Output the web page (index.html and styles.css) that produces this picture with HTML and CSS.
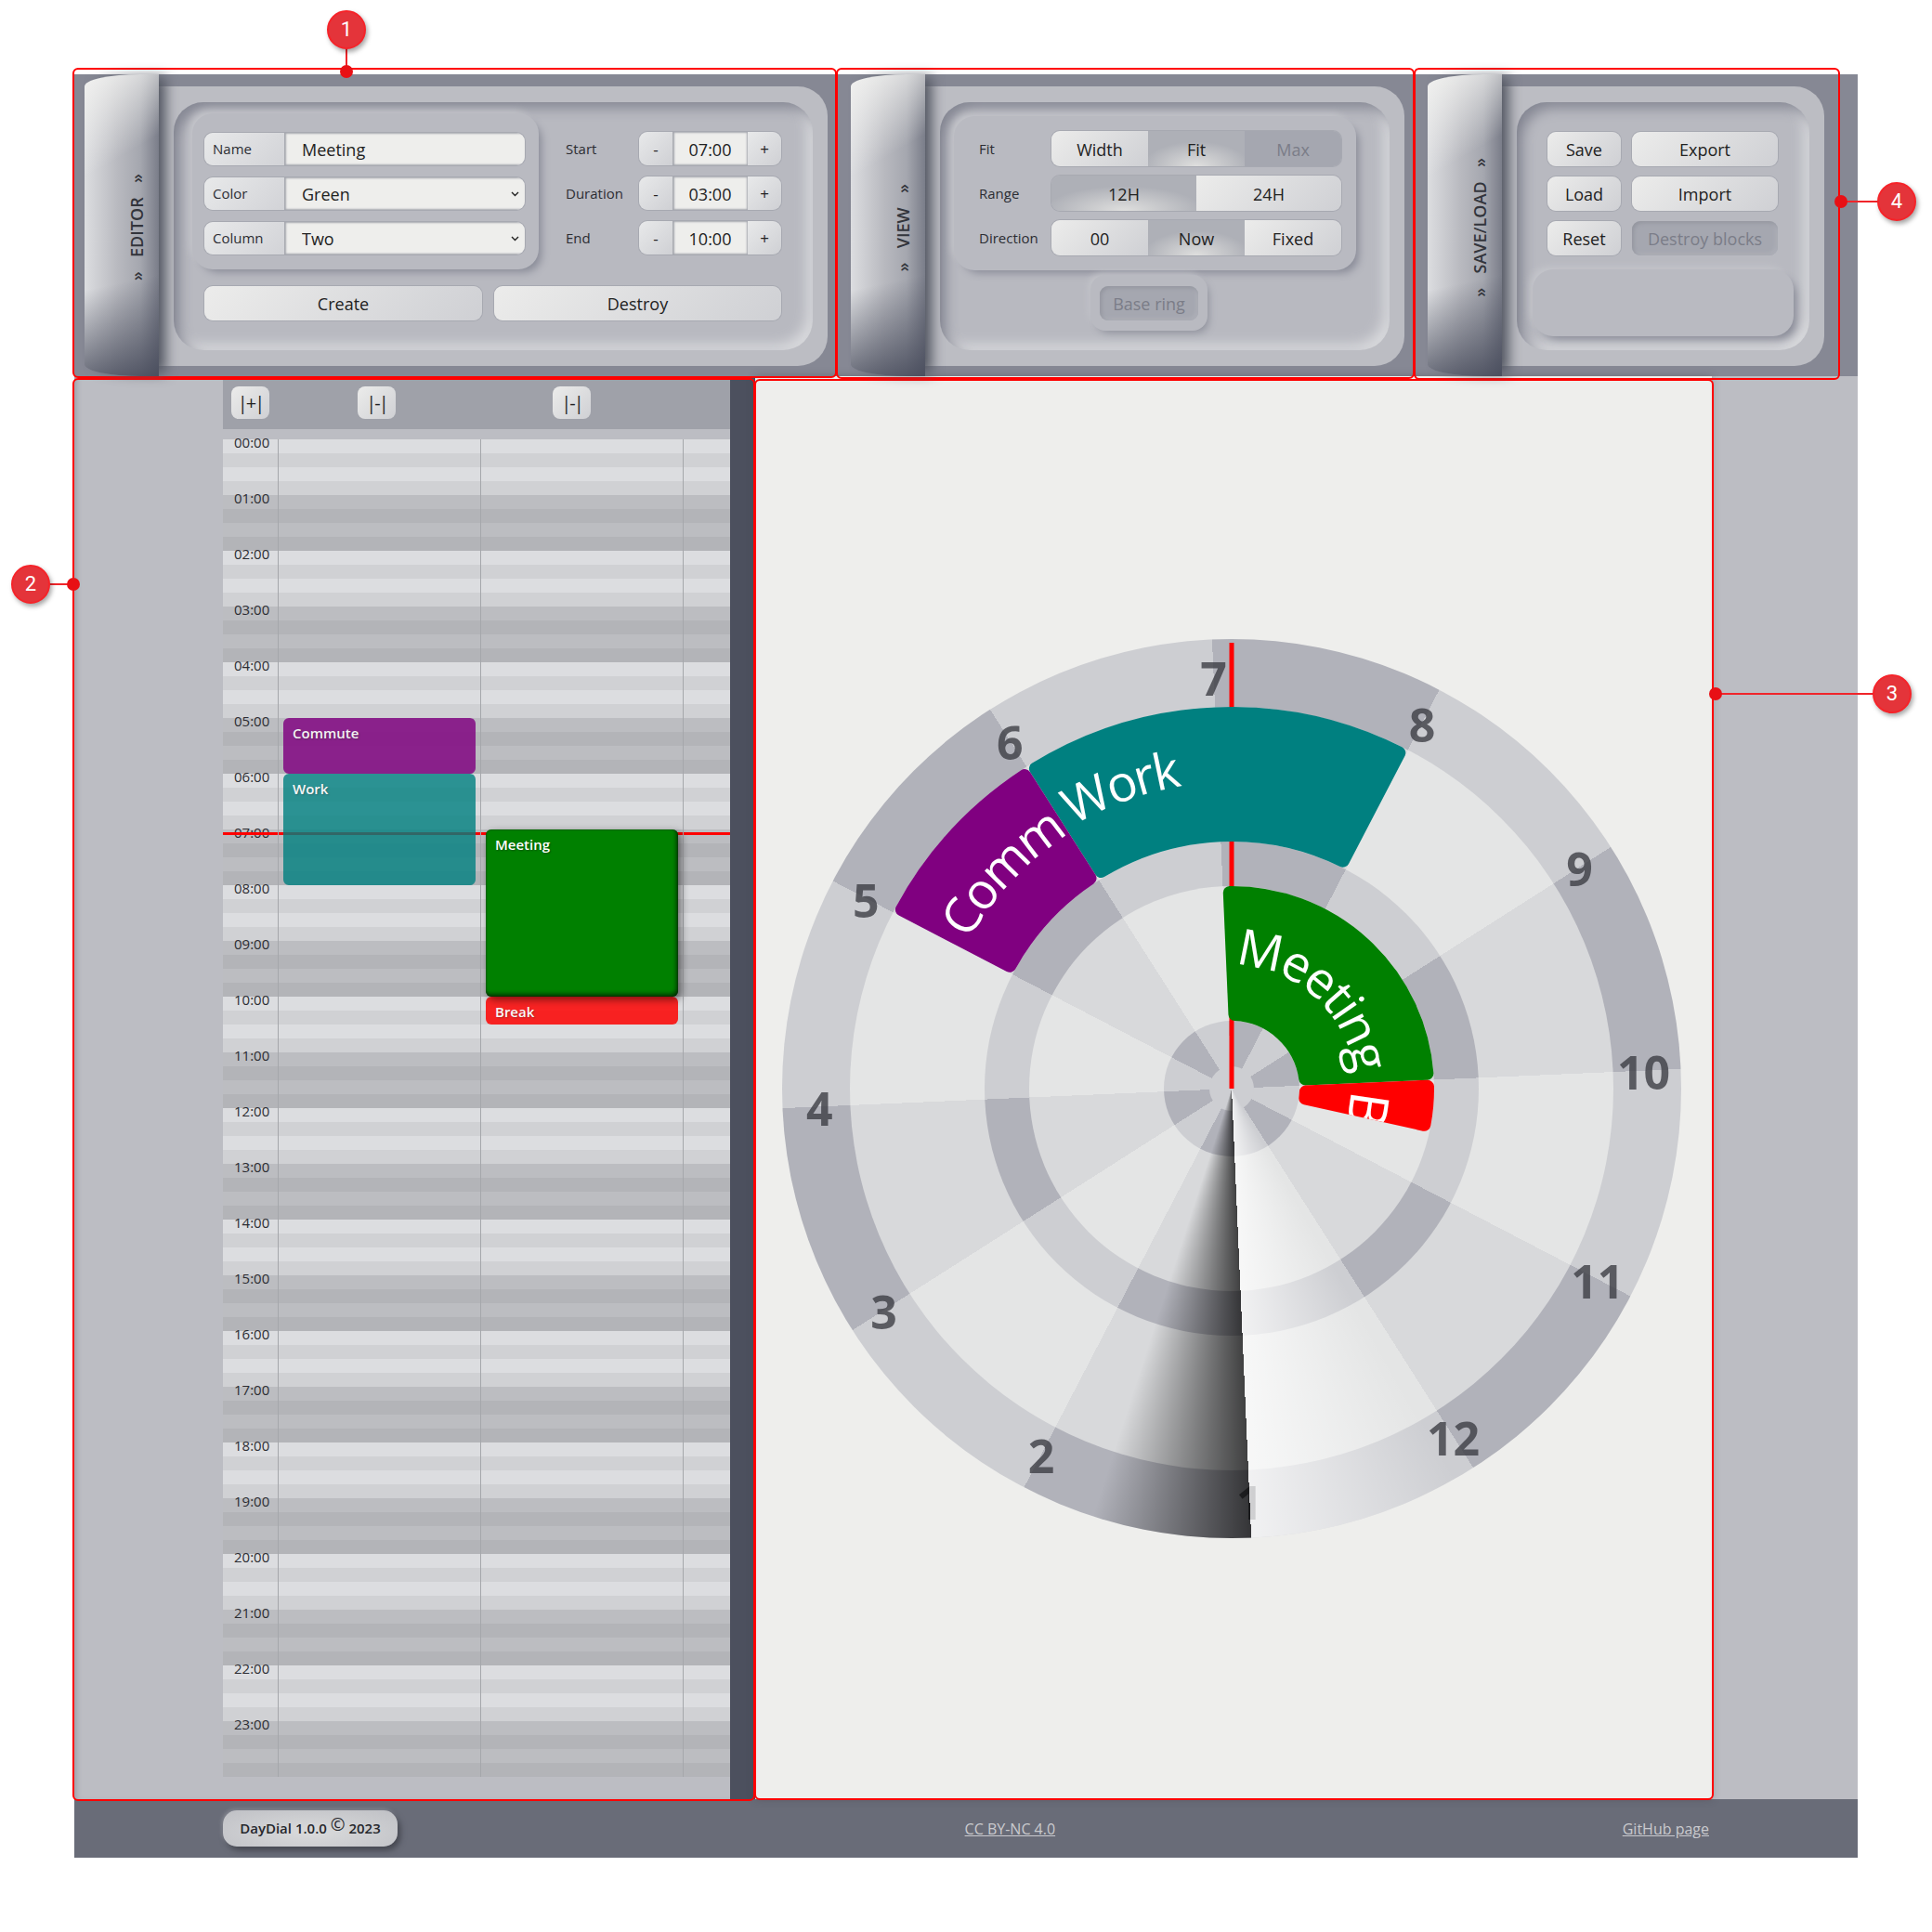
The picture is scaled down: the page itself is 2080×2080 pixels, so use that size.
FILE: index.html
```html
<!DOCTYPE html>
<html lang="en">
<head>
    <meta charset="UTF-8">
    <title>DayDial</title>
    <link rel="stylesheet" href="styles.css">
</head>
<body>
<div class="app">
    <div class="toolbar">
        <section class="panel panel-editor">
            <div class="tab"><span>» &nbsp;EDITOR&nbsp; »</span></div>
            <div class="panel-main">
                <div class="well well-editor">
                    <div class="editor-top">
                        <div class="raised fields">
                            <div class="field"><label>Name</label><input type="text" value="Meeting"></div>
                            <div class="field"><label>Color</label><select><option>Green</option></select></div>
                            <div class="field"><label>Column</label><select><option>Two</option></select></div>
                        </div>
                        <div class="times">
                            <div class="time-row"><span class="lbl">Start</span><div class="spinner"><button>-</button><input type="text" value="07:00"><button>+</button></div></div>
                            <div class="time-row"><span class="lbl">Duration</span><div class="spinner"><button>-</button><input type="text" value="03:00"><button>+</button></div></div>
                            <div class="time-row"><span class="lbl">End</span><div class="spinner"><button>-</button><input type="text" value="10:00"><button>+</button></div></div>
                        </div>
                    </div>
                    <div class="editor-actions">
                        <button class="btn btn-create">Create</button>
                        <button class="btn btn-destroy">Destroy</button>
                    </div>
                </div>
            </div>
        </section>

        <section class="panel panel-view">
            <div class="tab"><span>» &nbsp;VIEW&nbsp; »</span></div>
            <div class="panel-main">
                <div class="well well-view">
                    <div class="raised options">
                        <div class="opt-row"><span class="lbl">Fit</span>
                            <div class="seg"><button>Width</button><button class="on">Fit</button><button class="off">Max</button></div></div>
                        <div class="opt-row"><span class="lbl">Range</span>
                            <div class="seg"><button class="on">12H</button><button>24H</button></div></div>
                        <div class="opt-row"><span class="lbl">Direction</span>
                            <div class="seg"><button>00</button><button class="on">Now</button><button>Fixed</button></div></div>
                    </div>
                    <div class="raised base-wrap"><button class="btn off btn-base">Base ring</button></div>
                </div>
            </div>
        </section>

        <section class="panel panel-save">
            <div class="tab"><span>» &nbsp;SAVE/LOAD&nbsp; »</span></div>
            <div class="panel-main">
                <div class="well well-save">
                    <div class="save-grid">
                        <button class="btn">Save</button><button class="btn">Export</button>
                        <button class="btn">Load</button><button class="btn">Import</button>
                        <button class="btn">Reset</button><button class="btn off">Destroy blocks</button>
                    </div>
                    <div class="raised save-blank"></div>
                </div>
            </div>
        </section>
    </div>

    <div class="content">
        <div class="planner">
            <div class="calendar">
                <div class="cal-head">
                    <div class="cal-head-time"><button class="mini">|+|</button></div>
                    <div class="cal-head-col"><button class="mini">|-|</button></div>
                    <div class="cal-head-col"><button class="mini">|-|</button></div>
                </div>
                <div class="cal-grid">
                    <div class="hours">
                        <div>00:00</div><div>01:00</div><div>02:00</div><div>03:00</div>
                        <div>04:00</div><div>05:00</div><div>06:00</div><div>07:00</div>
                        <div>08:00</div><div>09:00</div><div>10:00</div><div>11:00</div>
                        <div>12:00</div><div>13:00</div><div>14:00</div><div>15:00</div>
                        <div>16:00</div><div>17:00</div><div>18:00</div><div>19:00</div>
                        <div>20:00</div><div>21:00</div><div>22:00</div><div>23:00</div>
                    </div>
                    <div class="now-line"></div>
                    <div class="cal-col">
                        <div class="block block-commute">Commute</div>
                        <div class="block block-work">Work</div>
                    </div>
                    <div class="cal-col">
                        <div class="block block-meeting">Meeting</div>
                        <div class="block block-break">Break</div>
                    </div>
                    <div class="cal-col cal-col-empty"></div>
                </div>
            </div>
            <div class="cal-scroll"></div>
        </div>

        <div class="dial-pane">
            <div class="dial">
                <div class="ring ring-a">
                    <div class="ring ring-b">
                        <div class="ring ring-c">
                            <div class="ring ring-d">
                                <div class="ring ring-e">
                                    <div class="ring ring-hub"></div>
                                </div>
                            </div>
                        </div>
                    </div>
                </div>

                <svg class="dial-svg" viewBox="-484 -484 968 968">
                    <defs>
                        <path id="arc-work" d="M-170 -283 A330 330 0 0 1 150 -294"/>
                        <path id="arc-comm" d="M-283 -160 A325 325 0 0 1 -172 -276"/>
                        <path id="arc-meeting" d="M3.5 -133 A133 133 0 0 1 131 23"/>
                        <path id="arc-break" d="M128 1.1 A128 128 0 0 1 22 126"/>
                        <clipPath id="clip-break"><path d="M60 -2 L230 -5 L214 47 L71 16 Z"/></clipPath>
                    </defs>
                    <g class="hour-labels">
                        <text x="-19.4" y="-442">7</text>
                        <text x="205" y="-392.3">8</text>
                        <text x="374.5" y="-237.1">9</text>
                        <text x="443.6" y="-17.9">10</text>
                        <text x="393.8" y="206.5">11</text>
                        <text x="238.6" y="376">12</text>
                        <text x="19.4" y="445.1">1</text>
                        <text x="-205" y="395.3">2</text>
                        <text x="-374.5" y="240.1">3</text>
                        <text x="-443.6" y="20.9">4</text>
                        <text x="-393.8" y="-203.5">5</text>
                        <text x="-238.6" y="-373">6</text>
                    </g>
                    <rect class="needle" x="-2.5" y="-480" width="5" height="480"/>
                    <path class="arc arc-teal" d="M-211.1 -344.5 A404 404 0 0 1 180.3 -361.5 L119.8 -245.3 A273 273 0 0 0 -140.7 -233.9 Z"/>
                    <path class="arc arc-purple" d="M-355.1 -192.7 A404 404 0 0 1 -222.9 -336.9 L-152.5 -226.4 A273 273 0 0 0 -238.9 -132.2 Z"/>
                    <path class="arc arc-green" d="M-2.2 -211 A211 211 0 0 1 210.4 -16.2 L79.3 -10.5 A80 80 0 0 0 3.5 -79.9 Z"/>
                    <path class="arc arc-red" d="M211 -2.2 A211 211 0 0 1 207.4 38.8 L79.3 10.4 A80 80 0 0 0 79.9 3.5 Z"/>
                    <text class="arc-text"><textPath href="#arc-work">Work</textPath></text>
                    <text class="arc-text"><textPath href="#arc-comm">Comm</textPath></text>
                    <text class="arc-text"><textPath href="#arc-meeting">Meeting</textPath></text>
                    <text class="arc-text arc-text-b" clip-path="url(#clip-break)"><textPath href="#arc-break">B</textPath></text>
                </svg>

                <div class="seam"></div>
            </div>
        </div>
    </div>

    <footer class="footer">
        <div class="badge">DayDial 1.0.0 <span class="copy">©</span> 2023</div>
        <a href="#">CC BY-NC 4.0</a>
        <a href="#">GitHub page</a>
    </footer>
</div>

<!-- callouts on top of the screenshot -->
<div class="frame frame-1"></div>
<div class="frame frame-view"></div>
<div class="frame frame-4"></div>
<div class="frame frame-2"></div>
<div class="frame frame-3"></div>

<div class="lead lead-1"></div>
<div class="lead lead-2"></div>
<div class="lead lead-3"></div>
<div class="lead lead-4"></div>
<div class="dot dot-1"></div>
<div class="dot dot-2"></div>
<div class="dot dot-3"></div>
<div class="dot dot-4"></div>
<div class="pin pin-1">1</div>
<div class="pin pin-2">2</div>
<div class="pin pin-3">3</div>
<div class="pin pin-4">4</div>
</body>
</html>
```

FILE: styles.css
```css
body{
    margin: 0;
    background: #fff;
    font-family: "Open Sans", "Noto Sans", sans-serif;
    color: #222;
}
button, input, select{
    font-family: inherit;
    color: #222;
}
.app{
    width: 1920px;
    margin: 80px 0 0 80px;
}

/* top bar */
.toolbar{
    display: flex;
    height: 325px;
    background: #868894;
}
.panel{
    display: flex;
    box-sizing: border-box;
}
.panel-editor{
    width: 820px;
    padding: 0 9px 0 11px;
}
.panel-view{
    width: 622px;
    padding: 0 10px 0 16px;
}
.panel-save{
    width: 478px;
    padding: 0 36px 0 15px;
}
.tab{
    position: relative;
    z-index: 2;
    width: 80px;
    flex: none;
    display: flex;
    align-items: center;
    justify-content: center;
    padding: 5px 0 0 32px;
    box-sizing: border-box;
    border-radius: 60px 0 0 60px / 13px 0 0 13px;
    background:
        linear-gradient(150deg, rgba(242,242,240,.95) 0%, rgba(242,242,240,0) 30%),
        linear-gradient(168deg, rgba(70,74,90,0) 68%, rgba(70,74,90,.9) 100%),
        linear-gradient(to right, #dcdde0 0, #b8b9bf 45%, #a5a7af 75%, #7a7d89 100%);
    box-shadow: 10px 0 14px -3px #50545f;
}
.tab span{
    writing-mode: vertical-rl;
    transform: rotate(180deg);
    font-size: 18px;
    font-weight: 600;
    word-spacing: 3px;
    color: #33353c;
    white-space: nowrap;
}
.panel-main{
    flex: 1;
    margin: 13px 0 11px;
    padding: 17px 16px;
    display: flex;
    background: #bcbdc3;
    border-radius: 0 32px 32px 0;
}
.well{
    flex: 1;
    box-sizing: border-box;
    border-radius: 32px;
    background: #b8b9c0;
    box-shadow: inset 8px 8px 14px -2px #858793, inset -8px -8px 14px -2px #d9dadd;
}
.raised{
    box-sizing: border-box;
    background: #b9bac1;
    border-radius: 22px;
    box-shadow: 6px 6px 9px -3px #8a8c98, -5px -5px 9px -3px #c6c7cc;
}

/* editor */
.well-editor{
    padding: 12px 34px 0 20px;
}
.editor-top{
    display: flex;
}
.fields{
    width: 373px;
    height: 168px;
    padding: 21px 15px 0 13px;
    display: flex;
    flex-direction: column;
    gap: 13px;
}
.field{
    display: flex;
    height: 35px;
    border-radius: 9px;
    box-shadow: 0 0 0 1px #a7a9b1;
    overflow: hidden;
}
.field label{
    width: 86px;
    flex: none;
    box-sizing: border-box;
    padding-left: 9px;
    font-size: 15px;
    line-height: 35px;
    color: #2c2d33;
    background: linear-gradient(135deg, #e8e9ea, #d2d3d7);
}
.field input, .field select{
    flex: 1;
    min-width: 0;
    box-sizing: border-box;
    border: 0;
    outline: 0;
    padding: 0 0 0 19px;
    font-size: 18px;
    background-color: #eeeeec;
    box-shadow: inset 3px 2px 2px -1px #a6a8af, inset 0 -2px 2px -1px #a6a8af;
}
.field select{
    padding-left: 19px;
    appearance: none;
    background-image: url("data:image/svg+xml,%3Csvg xmlns='http://www.w3.org/2000/svg' width='9' height='6'%3E%3Cpath d='M1 1l3.5 3.5L8 1' fill='none' stroke='%23222' stroke-width='1.4'/%3E%3C/svg%3E");
    background-repeat: no-repeat;
    background-position: right 6px center;
}
.times{
    margin-left: 29px;
    padding-top: 20px;
    display: flex;
    flex-direction: column;
    gap: 12px;
}
.time-row{
    display: flex;
    align-items: center;
    width: 232px;
}
.lbl{
    font-size: 15px;
    color: #2c2d33;
}
.time-row .lbl{
    width: 79px;
    flex: none;
}
.spinner{
    display: flex;
    width: 153px;
    height: 36px;
    box-sizing: border-box;
    border-radius: 9px;
    box-shadow: 0 0 0 1px #a7a9b1;
    overflow: hidden;
}
.spinner button{
    width: 36px;
    flex: none;
    border: 0;
    padding: 1px 0 0;
    font-size: 17px;
    background: linear-gradient(135deg, #e8e9ea, #cfd0d4);
}
.spinner input{
    width: 81px;
    box-sizing: border-box;
    border: 0;
    outline: 0;
    padding: 1px 0 0;
    text-align: center;
    font-size: 18px;
    background: #eeeeec;
    box-shadow: inset 3px 2px 2px -1px #a6a8af, inset -2px -2px 2px -1px #a6a8af;
}
.btn{
    height: 37px;
    padding: 0;
    border: 0;
    border-radius: 9px;
    font-size: 18px;
    background: linear-gradient(135deg, #ececeb, #cfd0d4);
    box-shadow: 0 0 0 1px #a7a9b1;
}
.btn.off{
    color: #7b7d88;
    background: #a5a7b0;
    box-shadow: inset 2px 2px 4px #94969f, inset -2px -2px 4px #afb1b9;
}
.editor-actions{
    display: flex;
    gap: 13px;
    margin: 18px 0 0 13px;
}
.btn-create{
    width: 299px;
}
.btn-destroy{
    width: 309px;
}

/* view */
.well-view{
    padding: 15px 36px 0 15px;
}
.options{
    height: 166px;
    padding: 16px 16px 0 27px;
    display: flex;
    flex-direction: column;
    gap: 10px;
}
.opt-row{
    display: flex;
    align-items: center;
    height: 38px;
}
.opt-row .lbl{
    width: 78px;
    flex: none;
}
.seg{
    flex: 1;
    display: flex;
    height: 38px;
    border-radius: 9px;
    overflow: hidden;
    box-shadow: 0 0 0 1px #a7a9b1;
}
.seg button{
    flex: 1;
    border: 0;
    padding: 1px 0 0;
    font-size: 18px;
    background: linear-gradient(135deg, #ececeb, #cfd0d4);
}
.seg button.on{
    background: radial-gradient(ellipse 55% 70% at 50% 100%, #dfdfde, #aeb0b7);
}
.seg button.off{
    color: #7b7d88;
    background: #a5a7b0;
}
.base-wrap{
    width: 126px;
    height: 60px;
    margin: 5px 0 0 147px;
    padding: 12px 10px;
    border-radius: 16px;
    box-shadow: 4px 5px 8px -3px #8e909b, -4px -4px 8px -3px #c6c7cc;
}
.btn-base{
    width: 106px;
    display: block;
}

/* save / load */
.well-save{
    padding: 32px 0 0 33px;
}
.save-grid{
    display: grid;
    grid-template-columns: 79px 157px;
    grid-auto-rows: 37px;
    gap: 11px 12px;
}
.save-blank{
    width: 281px;
    height: 72px;
    margin: 15px 0 0 -16px;
}

/* main area */
.content{
    display: flex;
    height: 1532px;
    background: #bcbdc3;
}
.planner{
    width: 733px;
    flex: none;
    display: flex;
    box-sizing: border-box;
    padding-left: 160px;
    box-shadow: inset 5px 0 6px -3px #9a9ca5;
}
.calendar{
    width: 546px;
    flex: none;
}
.cal-scroll{
    flex: 1;
    background: #4c505e;
}
.cal-head{
    display: grid;
    grid-template-columns: 59px 218px 218px;
    height: 57px;
    margin-bottom: 11px;
    background: #9fa1a9;
}
.cal-head-time{
    padding: 11px 0 0 9px;
}
.cal-head-col{
    padding: 11px 0 0 86px;
}
.cal-head-col + .cal-head-col{
    padding-left: 78px;
}
.mini{
    display: block;
    width: 41px;
    height: 35px;
    padding: 0;
    border: 0;
    border-radius: 8px;
    font-size: 20px;
    letter-spacing: -2px;
    background: linear-gradient(135deg, #ececeb, #cfd0d4);
}
.cal-grid{
    position: relative;
    display: grid;
    grid-template-columns: 59px 218px 218px 51px;
    height: 1440px;
    background: repeating-linear-gradient(to bottom,
        #dcdde0 0, #dcdde0 15px,
        #d0d1d4 15px, #d0d1d4 30px,
        #dcdde0 30px, #dcdde0 45px,
        #d0d1d4 45px, #d0d1d4 60px,
        #bcbdc1 60px, #bcbdc1 75px,
        #b3b4b8 75px, #b3b4b8 90px,
        #bcbdc1 90px, #bcbdc1 105px,
        #b3b4b8 105px, #b3b4b8 120px);
}
.hours div{
    height: 60px;
    line-height: 6px;
    padding-left: 12px;
    font-size: 15px;
    color: #2c2d33;
}
.now-line{
    position: absolute;
    left: 0;
    right: 0;
    top: 423px;
    height: 3px;
    background: #f00;
}
.cal-col{
    position: relative;
    display: grid;
    grid-template-rows: repeat(96, 15px);
    box-sizing: border-box;
    border-left: 1px solid #a5a7ab;
}
.block{
    margin: 0 5px;
    padding: 5px 0 0 10px;
    border-radius: 6px;
    font-size: 15px;
    font-weight: 600;
    line-height: 22px;
    color: #fff;
    text-shadow: 1px 1px 2px rgba(0,0,0,.35);
}
.block-commute{
    grid-row: 21 / span 4;
    background: #800080;
    opacity: .82;
}
.block-work{
    grid-row: 25 / span 8;
    background: #008080;
    opacity: .8;
}
.block-meeting{
    grid-row: 29 / span 12;
    background: #008000;
    box-shadow: inset 0 0 2px rgba(0,0,0,.6), inset -2px -3px 4px rgba(0,0,0,.55), 3px 3px 8px rgba(0,0,0,.5);
    z-index: 1;
}
.block-break{
    grid-row: 41 / span 2;
    background: #f00;
    opacity: .84;
}

/* dial */
.dial-pane{
    width: 1030px;
    flex: none;
    display: flex;
    align-items: center;
    justify-content: center;
    box-sizing: border-box;
    padding: 2px 5px 0 0;
    background: #eeeeec;
    box-shadow: 0 0 8px rgba(60,60,70,.35);
}
.dial{
    position: relative;
    width: 968px;
    height: 968px;
    flex: none;
}
.ring{
    display: flex;
    align-items: center;
    justify-content: center;
    border-radius: 50%;
}
.ring-a, .ring-c, .ring-e{
    background: repeating-conic-gradient(from -2.5deg, #b1b2ba 0deg 30deg, #cdced2 30deg 60deg);
}
.ring-b, .ring-d{
    background: repeating-conic-gradient(from -2.5deg, #d8d9db 0deg 30deg, #e4e5e5 30deg 60deg);
}
.ring-a{
    width: 968px;
    height: 968px;
}
.ring-b{
    width: 822px;
    height: 822px;
}
.ring-c{
    width: 532px;
    height: 532px;
}
.ring-d{
    width: 436px;
    height: 436px;
}
.ring-e{
    width: 146px;
    height: 146px;
}
.ring-hub{
    width: 48px;
    height: 48px;
    background: #cdced2;
}
.dial-svg{
    position: absolute;
    left: 0;
    top: 0;
    width: 968px;
    height: 968px;
}
.hour-labels text{
    font-size: 50px;
    font-weight: 700;
    text-anchor: middle;
    dominant-baseline: central;
    fill: #3a3b42;
    opacity: .78;
}
.needle{
    fill: #f00;
}
.arc{
    stroke-width: 14;
    stroke-linejoin: round;
}
.arc-teal{
    fill: #008080;
    stroke: #008080;
}
.arc-purple{
    fill: #800080;
    stroke: #800080;
}
.arc-green{
    fill: #008000;
    stroke: #008000;
}
.arc-red{
    fill: #f00;
    stroke: #f00;
}
.arc-text{
    font-size: 54px;
    letter-spacing: -2.5px;
    fill: #fff;
}
.arc-text-b{
    font-size: 58px;
}
.seam{
    position: absolute;
    left: 0;
    top: 0;
    width: 968px;
    height: 968px;
    border-radius: 50%;
    background: conic-gradient(from 150deg,
        rgba(255,255,255,0) 0deg,
        rgba(255,255,255,.72) 27.5deg,
        rgba(0,0,0,.7) 27.5deg,
        rgba(0,0,0,0) 48deg,
        rgba(0,0,0,0) 360deg);
}

/* footer */
.footer{
    display: flex;
    align-items: center;
    justify-content: space-between;
    height: 63px;
    padding: 0 160px;
    background: #696c78;
}
.footer a{
    font-size: 16px;
    color: #c9cace;
}
.badge{
    width: 188px;
    height: 39px;
    box-sizing: border-box;
    text-align: center;
    line-height: 36px;
    font-size: 15px;
    font-weight: 600;
    white-space: nowrap;
    color: #26272c;
    border-radius: 15px;
    background: radial-gradient(ellipse at 50% 60%, #dadbdc, #bfc0c5);
    box-shadow: 3px 4px 6px #44464f, -1px -1px 4px #8e909a;
}
.copy{
    position: relative;
    top: -3px;
    font-size: 19px;
    font-weight: 400;
}

/* annotations */
.frame{
    position: absolute;
    box-sizing: border-box;
    border: 2px solid #f00;
    border-radius: 6px;
}
.frame-1{
    left: 78px;
    top: 73px;
    width: 823px;
    height: 334px;
}
.frame-view{
    left: 900px;
    top: 73px;
    width: 623px;
    height: 335px;
}
.frame-4{
    left: 1522px;
    top: 73px;
    width: 459px;
    height: 336px;
}
.frame-2{
    left: 78px;
    top: 407px;
    width: 735px;
    height: 1532px;
}
.frame-3{
    left: 812px;
    top: 408px;
    width: 1033px;
    height: 1530px;
}
.pin{
    position: absolute;
    width: 42px;
    height: 42px;
    box-sizing: border-box;
    border: 2px solid #f62329;
    border-radius: 50%;
    background: #e4343a;
    color: #fff;
    font-size: 22px;
    font-family: "Roboto", sans-serif;
    text-align: center;
    line-height: 38px;
    box-shadow: 2px 3px 5px rgba(0,0,0,.35);
}
.pin-1{
    left: 352px;
    top: 11px;
}
.pin-2{
    left: 12px;
    top: 608px;
}
.pin-3{
    left: 2016px;
    top: 726px;
}
.pin-4{
    left: 2021px;
    top: 196px;
}
.dot{
    position: absolute;
    width: 14px;
    height: 14px;
    border-radius: 50%;
    background: #e81015;
}
.dot-1{
    left: 366px;
    top: 70px;
}
.dot-2{
    left: 72px;
    top: 622px;
}
.dot-3{
    left: 1840px;
    top: 740px;
}
.dot-4{
    left: 1975px;
    top: 210px;
}
.lead{
    position: absolute;
    background: #f0252a;
}
.lead-1{
    left: 372px;
    top: 50px;
    width: 2px;
    height: 24px;
}
.lead-2{
    left: 52px;
    top: 628px;
    width: 24px;
    height: 2px;
}
.lead-3{
    left: 1846px;
    top: 746px;
    width: 172px;
    height: 2px;
}
.lead-4{
    left: 1982px;
    top: 216px;
    width: 40px;
    height: 2px;
}
```
